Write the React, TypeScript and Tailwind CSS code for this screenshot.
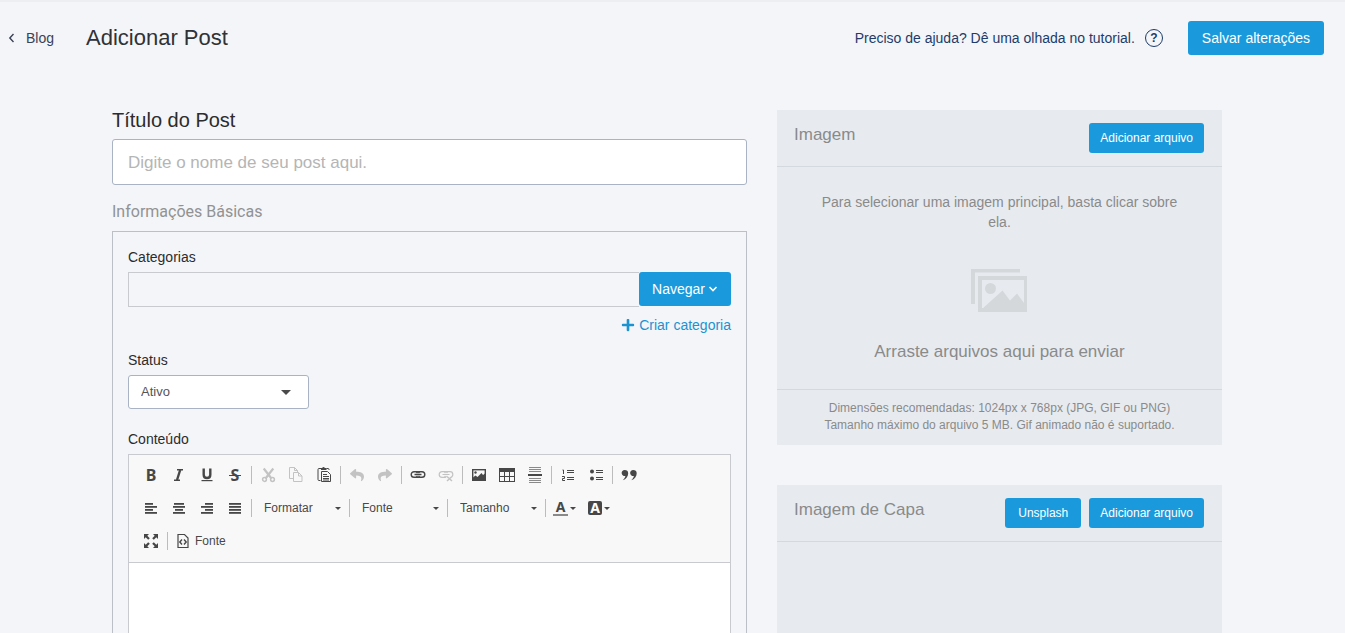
import React, { type ReactNode } from 'react';
import { FaPlus, FaReply, FaShare } from 'react-icons/fa';

const DARK = '#474747';
const LIGHT = '#c3c3c3';

function Icon({ children }: { children: ReactNode }) {
  return (
    <svg width="16" height="16" viewBox="0 0 16 16" fill="none" aria-hidden="true">
      {children}
    </svg>
  );
}

function ToolButton({ label, disabled, children }: { label: string; disabled?: boolean; children: ReactNode }) {
  return (
    <button
      type="button"
      aria-label={label}
      disabled={disabled}
      className="flex h-8 w-7 items-center justify-center rounded-sm text-[#474747] enabled:hover:bg-[#e5e5e5] disabled:text-[#c3c3c3]"
    >
      {children}
    </button>
  );
}

function Separator() {
  return <span aria-hidden="true" className="mx-0.5 h-[18px] w-px bg-[#bcbcbc]" />;
}

function Caret() {
  return (
    <svg width="6" height="3" viewBox="0 0 6 3" aria-hidden="true">
      <path d="M0 0h6L3 3z" fill={DARK} />
    </svg>
  );
}

function Combo({ label, options }: { label: string; options: string[] }) {
  return (
    <div className="relative flex w-[93px] items-center">
      <select
        aria-label={label}
        className="h-7 w-full appearance-none bg-transparent pl-2.5 pr-4 text-xs text-[#484848] outline-none"
      >
        <option>{label}</option>
        {options.map((o) => (
          <option key={o}>{o}</option>
        ))}
      </select>
      <span className="pointer-events-none absolute right-1.5">
        <Caret />
      </span>
    </div>
  );
}

function ColorButton({ label, children }: { label: string; children: ReactNode }) {
  return (
    <button type="button" aria-label={label} className="flex h-8 items-center gap-0.5 px-[5px] hover:bg-[#e5e5e5]">
      {children}
      <Caret />
    </button>
  );
}

function Lines({ rows }: { rows: [number, number][] }) {
  return (
    <Icon>
      {rows.map(([x, w], i) => (
        <rect key={i} x={x} y={3 + i * 3} width={w} height="1.8" fill={DARK} />
      ))}
    </Icon>
  );
}

const LINK_PATH =
  'M7.500 4.700H4A2.800 2.800 0 0 0 4 10.300H7.500M8.500 4.700H12A2.800 2.800 0 0 1 12 10.300H8.500M4.500 7.500h7M7.500 4.700a2 2 0 0 1 1.800 1.400M7.500 10.300a2 2 0 0 0 1.800-1.400M8.500 4.700a2 2 0 0 0-1.800 1.400M8.500 10.300a2 2 0 0 1-1.800-1.400';

function Toolbar() {
  return (
    <div role="toolbar" aria-label="Editor" className="flex flex-col gap-px border-b border-[#c9cad0] bg-[#f8f8f8] px-2 pb-[5px] pt-1">
      <div className="flex items-center">
        <ToolButton label="Negrito">
          <span className="font-['Noto_Sans',sans-serif] text-base font-bold leading-4">B</span>
        </ToolButton>
        <ToolButton label="Itálico">
          <Icon>
            <path d="M6 2.800h6M3 13.200h6" stroke={DARK} strokeWidth="1.400" />
            <path d="M9.200 3L6 13" stroke={DARK} strokeWidth="2.400" />
          </Icon>
        </ToolButton>
        <ToolButton label="Sublinhado">
          <Icon>
            <path d="M4.700 1.500v6.200c0 2.300 1.200 3.300 3.300 3.300s3.300-1 3.300-3.300V1.500" stroke={DARK} strokeWidth="2.400" />
            <rect x="2.500" y="13" width="11" height="1.200" fill={DARK} />
          </Icon>
        </ToolButton>
        <ToolButton label="Tachado">
          <span className="relative flex items-center font-['Noto_Sans',sans-serif] text-base font-bold leading-4">
            S
            <span className="absolute -inset-x-0.5 top-2 h-px bg-[#474747]" />
          </span>
        </ToolButton>
        <Separator />
        <ToolButton label="Recortar" disabled>
          <Icon>
            <path d="M3.700 1.500L11.500 11.500M13.300 1.500L5.500 11.500" stroke={LIGHT} strokeWidth="2.200" />
            <circle cx="4.500" cy="12.500" r="1.900" stroke={LIGHT} strokeWidth="1.500" />
            <circle cx="12.500" cy="12.500" r="1.900" stroke={LIGHT} strokeWidth="1.500" />
          </Icon>
        </ToolButton>
        <ToolButton label="Copiar" disabled>
          <Icon>
            <path d="M5.500 11.500h-4v-11h5l3 3v2M6.500 .500v3h3" stroke={LIGHT} />
            <path d="M5.500 5.500h5l3.500 3.500v5.500H5.500z" fill="#f8f8f8" stroke={LIGHT} />
            <path d="M10.500 5.500V9H14" stroke={LIGHT} />
          </Icon>
        </ToolButton>
        <ToolButton label="Colar">
          <Icon>
            <path d="M5 1.500H3a1 1 0 0 0-1 1v10a1 1 0 0 0 1 1h1.500M10.500 1.500H12a1 1 0 0 1 1 1V3" stroke={DARK} />
            <path d="M5 3V1h1.200a1.400 1.400 0 0 1 2.600 0H10.500v2z" fill={DARK} />
            <path d="M5.500 4.500h6l3 3v7h-9z" stroke={DARK} />
            <path d="M7 7.500h4M7 9.500h6M7 11.500h6M7 13h6" stroke={DARK} />
          </Icon>
        </ToolButton>
        <Separator />
        <ToolButton label="Desfazer" disabled>
          <FaReply size={14} />
        </ToolButton>
        <ToolButton label="Refazer" disabled>
          <FaShare size={14} />
        </ToolButton>
        <Separator />
        <ToolButton label="Inserir link">
          <Icon>
            <path d={LINK_PATH} stroke={DARK} strokeWidth="1.400" />
          </Icon>
        </ToolButton>
        <ToolButton label="Remover link" disabled>
          <Icon>
            <path d={LINK_PATH} stroke={LIGHT} strokeWidth="1.200" />
            <path d="M9 9.500l5 4.500M14 9.500L9 14" stroke="#f8f8f8" strokeWidth="4" />
            <path d="M9 9.500l5 4.500M14 9.500L9 14" stroke={LIGHT} strokeWidth="1.500" />
          </Icon>
        </ToolButton>
        <Separator />
        <ToolButton label="Imagem">
          <Icon>
            <rect x="1.700" y="2.700" width="12.600" height="10.600" stroke={DARK} strokeWidth="1.400" />
            <circle cx="4.500" cy="5.500" r="1.200" fill={DARK} />
            <path d="M2 13v-2.500L4.500 8.500l2 1.500L10.500 6l1.500 2 2-1.500V13z" fill={DARK} />
          </Icon>
        </ToolButton>
        <ToolButton label="Tabela">
          <Icon>
            <rect x="0.500" y="1.500" width="15" height="13" stroke={DARK} />
            <path d="M0 1h16v4H0z" fill={DARK} />
            <path d="M5.500 5v9M10.500 5v9M1 9.500h14" stroke={DARK} />
          </Icon>
        </ToolButton>
        <ToolButton label="Linha horizontal">
          <Icon>
            <path d="M2 .500h12M2 2.500h12M2 4.500h12M2 11.500h12M2 13.500h12M2 15.500h12" stroke="#8a8a8a" />
            <rect x="1" y="7" width="14" height="2" fill={DARK} />
          </Icon>
        </ToolButton>
        <Separator />
        <ToolButton label="Lista numerada">
          <Icon>
            <path d="M2.500 3h1v4M2 9.500h2.500v2H2.500v2H5" stroke={DARK} />
            <path d="M7 3.500h7M7 5.500h7M7 10.500h7M7 12.500h7" stroke={DARK} />
          </Icon>
        </ToolButton>
        <ToolButton label="Lista com marcadores">
          <Icon>
            <circle cx="4" cy="4.500" r="2" fill={DARK} />
            <circle cx="4" cy="11.500" r="2" fill={DARK} />
            <path d="M8 3.500h7M8 5.500h7M8 10.500h7M8 12.500h7" stroke={DARK} />
          </Icon>
        </ToolButton>
        <Separator />
        <ToolButton label="Citação">
          <Icon>
            <path
              d="M3.700 3a3 3 0 1 0 .7 5.900C4 10.600 3.100 11.900 1.800 13.200c3.400-1 5.400-3.700 5.400-7C7.200 4.200 5.800 3 3.700 3zM12.200 3a3 3 0 1 0 .7 5.900c-.4 1.700-1.300 3-2.600 4.300 3.400-1 5.400-3.700 5.400-7 0-2-1.400-3.200-3.500-3.200z"
              fill={DARK}
            />
          </Icon>
        </ToolButton>
      </div>

      <div className="flex items-center">
        <ToolButton label="Alinhar à esquerda">
          <Lines rows={[[2, 8], [2, 12], [2, 8], [2, 12]]} />
        </ToolButton>
        <ToolButton label="Centralizar">
          <Lines rows={[[3, 10], [2, 12], [4, 8], [2, 12]]} />
        </ToolButton>
        <ToolButton label="Alinhar à direita">
          <Lines rows={[[6, 8], [2, 12], [6, 8], [2, 12]]} />
        </ToolButton>
        <ToolButton label="Justificar">
          <Lines rows={[[2, 12], [2, 12], [2, 12], [2, 12]]} />
        </ToolButton>
        <Separator />
        <Combo label="Formatar" options={['Normal', 'Título 1', 'Título 2']} />
        <Separator />
        <Combo label="Fonte" options={['Arial', 'Georgia', 'Verdana']} />
        <Separator />
        <Combo label="Tamanho" options={['10', '12', '14', '18']} />
        <Separator />
        <ColorButton label="Cor do texto">
          <span className="flex h-4 w-[15px] flex-col items-center justify-between font-['Noto_Sans',sans-serif] text-sm font-bold leading-[14px] text-[#474747]">
            A
            <span className="h-0.5 w-full shrink-0 bg-[#8a8a8a]" />
          </span>
        </ColorButton>
        <ColorButton label="Cor do plano de fundo">
          <span className="ml-0.5 flex h-3.5 w-3.5 items-center justify-center rounded-[2px] bg-[#474747] font-['Noto_Sans',sans-serif] text-sm font-bold leading-none text-white">
            A
          </span>
        </ColorButton>
      </div>

      <div className="flex items-center">
        <ToolButton label="Maximizar">
          <Icon>
            <path
              d="M1 1h5L4.300 2.700l2.500 2.500-1.600 1.600-2.500-2.500L1 6zM15 1v5l-1.700-1.700-2.500 2.500-1.600-1.600 2.500-2.500L10 1zM1 15v-5l1.700 1.700 2.500-2.500 1.600 1.600-2.500 2.500L6 15zM15 15h-5l1.700-1.700-2.500-2.500 1.600-1.600 2.500 2.500L15 10z"
              fill={DARK}
            />
          </Icon>
        </ToolButton>
        <Separator />
        <button type="button" className="flex h-8 items-center gap-1 px-[5px] text-xs text-[#484848] hover:bg-[#e5e5e5]">
          <Icon>
            <path d="M3 1.500h6.500L13 5v9.500H3z" stroke={DARK} strokeWidth="1.200" />
            <path d="M7 6.500L4.800 9 7 11.500M9 6.500L11.200 9 9 11.500" stroke={DARK} strokeWidth="1.400" />
          </Icon>
          Fonte
        </button>
      </div>
    </div>
  );
}

function SmallButton({ children }: { children: ReactNode }) {
  return (
    <button type="button" className="h-[30px] min-w-[76px] rounded-[3px] bg-[#1a9adc] px-[11px] text-xs text-white hover:bg-[#1589c6]">
      {children}
    </button>
  );
}

function UploadPanel({ title, actions, children }: { title: string; actions: ReactNode; children?: ReactNode }) {
  return (
    <section className="bg-[#e7ebf0] text-[#8a8a8a]">
      <div className="flex items-start justify-between border-b border-[#d3d9de] py-[13px] pl-[17px] pr-[18px]">
        <h2 className="text-[17px] leading-6">{title}</h2>
        <div className="flex gap-2">{actions}</div>
      </div>
      {children}
    </section>
  );
}

export default function App() {
  return (
    <div className="h-screen overflow-hidden border-t-2 border-[#eceef2] bg-[#f3f5f9] font-['Liberation_Sans',Arial,sans-serif] text-sm text-[#2c2c2c]">
      <header className="flex h-[72px] items-center justify-between pl-2 pr-[21px]">
        <div className="flex items-center gap-8">
          <a href="#blog" className="flex items-center gap-2.5 text-[#3b4256]">
            <svg width="8" height="10" viewBox="0 0 8 10" fill="none" aria-hidden="true">
              <path d="M5.500 1L1.800 5l3.700 4" stroke="currentColor" strokeWidth="1.400" />
            </svg>
            Blog
          </a>
          <h1 className="text-[22px] leading-7 text-[#303236]">Adicionar Post</h1>
        </div>
        <div className="flex items-center gap-[25px]">
          <a href="#tutorial" className="flex items-center gap-2.5 text-[#1d3c6a]">
            Preciso de ajuda? Dê uma olhada no tutorial.
            <span className="flex size-[18px] items-center justify-center rounded-full border border-[#1d3c6a] text-xs font-bold leading-none">
              ?
            </span>
          </a>
          <button type="button" className="h-[34px] rounded-[3px] bg-[#1a9adc] px-3.5 text-white hover:bg-[#1589c6]">
            Salvar alterações
          </button>
        </div>
      </header>

      <main className="grid grid-cols-[635fr_445fr] gap-[30px] pl-28 pr-[123px] pt-9">
        <div className="flex flex-col">
          <label htmlFor="title" className="text-xl leading-5">
            Título do Post
          </label>
          <input
            id="title"
            type="text"
            placeholder="Digite o nome de seu post aqui."
            className="mt-[9px] h-[46px] rounded-[3px] border border-[#a9b3c4] bg-white px-[15px] pt-0.5 text-[17px] outline-none placeholder:text-[#b5b5b5]"
          />
          <h2 className="mt-4 font-['Roboto',sans-serif] text-base font-normal leading-[22px] text-[#929292]">Informações Básicas</h2>

          <section className="mt-2 border border-[#bcc0c6] p-[15px] pb-0">
            <label htmlFor="categories" className="block leading-5">
              Categorias
            </label>
            <div className="mt-[5px] flex items-start">
              <input
                id="categories"
                type="text"
                className="h-[35px] min-w-0 flex-1 border border-r-0 border-[#c9cad0] bg-transparent px-3 outline-none"
              />
              <button
                type="button"
                aria-haspopup="menu"
                className="flex h-[34px] items-center gap-[3px] rounded-[3px] bg-[#1a9adc] px-[13px] text-white hover:bg-[#1589c6]"
              >
                Navegar
                <svg width="10" height="8" viewBox="0 0 10 8" fill="none" aria-hidden="true">
                  <path d="M1.500 2L5 5.500 8.500 2" stroke="currentColor" strokeWidth="1.600" />
                </svg>
              </button>
            </div>
            <div className="mt-2 flex justify-end">
              <a href="#nova-categoria" className="flex items-center gap-1 leading-5 text-[#1c92d0]">
                <FaPlus size={14} />
                Criar categoria
              </a>
            </div>

            <label htmlFor="status" className="mt-[15px] block leading-5">
              Status
            </label>
            <div className="relative mt-[5px] flex w-[181px] items-center">
              <select
                id="status"
                className="h-[34px] w-full appearance-none rounded-[3px] border border-[#a9b3c4] bg-white pl-3 pr-8 text-[13px] text-[#555] outline-none"
              >
                <option>Ativo</option>
                <option>Inativo</option>
              </select>
              <svg width="10" height="5" viewBox="0 0 10 5" className="pointer-events-none absolute right-[18px]" aria-hidden="true">
                <path d="M0 0h10L5 5z" fill="#4a4a4a" />
              </svg>
            </div>

            <label htmlFor="content" className="mt-5 block leading-5">
              Conteúdo
            </label>
            <div className="mt-[5px] border border-[#c9cad0] bg-white">
              <Toolbar />
              <textarea id="content" className="block h-72 w-full resize-none p-5 outline-none" />
            </div>
          </section>
        </div>

        <div className="flex flex-col gap-10">
          <UploadPanel title="Imagem" actions={<SmallButton>Adicionar arquivo</SmallButton>}>
            <div className="flex flex-col items-center px-10 py-[25px] text-center">
              <p className="text-sm leading-5">Para selecionar uma imagem principal, basta clicar sobre ela.</p>
              <svg width="57" height="43" viewBox="0 0 57 43" className="mb-7 mt-[37px]" fill="none" aria-hidden="true">
                <path d="M0 0h49v3.500H4V35H0z" fill="#d5d8db" />
                <path d="M7 7h49v36H7z" fill="#d5d8db" />
                <path d="M11 11h42v28H11z" fill="#e7ebf0" />
                <circle cx="19.500" cy="19.500" r="5.500" fill="#d5d8db" />
                <path d="M11 40l20.500-18.500 7.500 10 7-7 7 9.500v6z" fill="#d5d8db" />
              </svg>
              <p className="text-[17px] leading-6">Arraste arquivos aqui para enviar</p>
            </div>
            <div className="border-t border-[#d3d9de] px-4 pb-[11px] pt-2.5 text-center text-xs leading-[17px]">
              <p>Dimensões recomendadas: 1024px x 768px (JPG, GIF ou PNG)</p>
              <p>Tamanho máximo do arquivo 5 MB. Gif animado não é suportado.</p>
            </div>
          </UploadPanel>
          <UploadPanel
            title="Imagem de Capa"
            actions={
              <>
                <SmallButton>Unsplash</SmallButton>
                <SmallButton>Adicionar arquivo</SmallButton>
              </>
            }
          >
            <div className="h-56" />
          </UploadPanel>
        </div>
      </main>
    </div>
  );
}
